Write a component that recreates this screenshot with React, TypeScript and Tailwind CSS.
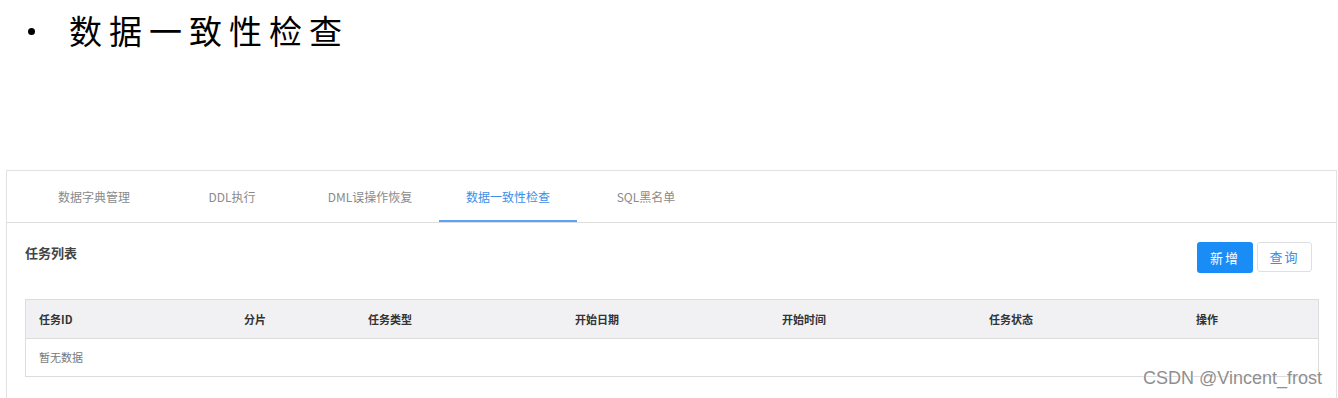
import React from "react";

const tabs = ["数据字典管理", "DDL执行", "DML误操作恢复", "数据一致性检查", "SQL黑名单"];
const cols: { label: string; w: string }[] = [
  { label: "任务ID", w: "w-[205px]" },
  { label: "分片", w: "w-[124px]" },
  { label: "任务类型", w: "w-[207px]" },
  { label: "开始日期", w: "w-[207px]" },
  { label: "开始时间", w: "w-[207px]" },
  { label: "任务状态", w: "w-[207px]" },
  { label: "操作", w: "flex-1" },
];

export default function App() {
  return (
    <div
      className="relative w-[1338px] h-[398px] overflow-hidden bg-white"
      style={{ fontFamily: '"Noto Sans CJK SC", "Noto Sans", sans-serif' }}
    >
      {/* Title */}
      <div className="flex items-center h-[60px] pl-[28px]">
        <span className="w-[7px] h-[7px] rounded-full bg-black mt-[3px]" />
        <span className="ml-[34px] text-[33px] leading-[40px] tracking-[7px] text-black">数据一致性检查</span>
      </div>

      {/* Panel */}
      <div className="mt-[110px] ml-[6px] mr-[1px] border border-[#e2e2e2] h-[300px]">
        {/* Tabs */}
        <div className="flex h-[52px] pl-[18px] border-b border-[#dedede]">
          {tabs.map((t, i) => (
            <div
              key={t}
              className={
                i === 3
                  ? "w-[138px] flex items-center justify-center text-[12px] text-[#3d8ee8] border-b-2 border-[#5aa2f3] pt-[2px]"
                  : "w-[138px] flex items-center justify-center text-[12px] text-[#8a8a8a]"
              }
            >
              {t}
            </div>
          ))}
        </div>

        {/* Body */}
        <div className="pl-[18px] pr-[17px]">
          <div className="flex justify-between items-start pt-[19px]">
            <div className="text-[13px] leading-[20px] font-bold text-[#444] mt-[1px]">任务列表</div>
            <div className="flex gap-[4px] mr-[7px]">
              <button className="w-[56px] h-[31px] rounded-[3px] bg-[#1a8cf6] text-white text-[13px] tracking-[2px]">新增</button>
              <button className="w-[55px] h-[30px] rounded-[3px] border border-[#dcdfe6] bg-white text-[#3b8de6] text-[13px] tracking-[2px]">查询</button>
            </div>
          </div>

          {/* Table */}
          <div className="mt-[26px] border border-[#dcdcdc]">
            <div className="flex h-[39px] bg-[#f1f1f3] border-b border-[#dcdcdc]">
              {cols.map((c) => (
                <div key={c.label} className={`${c.w} flex items-center pl-[13px] text-[11px] font-bold text-[#333]`}>
                  {c.label}
                </div>
              ))}
            </div>
            <div className="h-[37px] flex items-center pl-[13px] text-[11px] text-[#777]">暂无数据</div>
          </div>
        </div>
      </div>

      {/* Watermark */}
      <div
        className="absolute left-[1143px] top-[367px] text-[18px] leading-[22px] text-[#8f8f8f]"
        style={{ fontFamily: '"Liberation Sans", Arial, sans-serif', textShadow: "0 0 2px #fff, 0 0 2px #fff" }}
      >
        CSDN @Vincent_frost
      </div>
    </div>
  );
}
